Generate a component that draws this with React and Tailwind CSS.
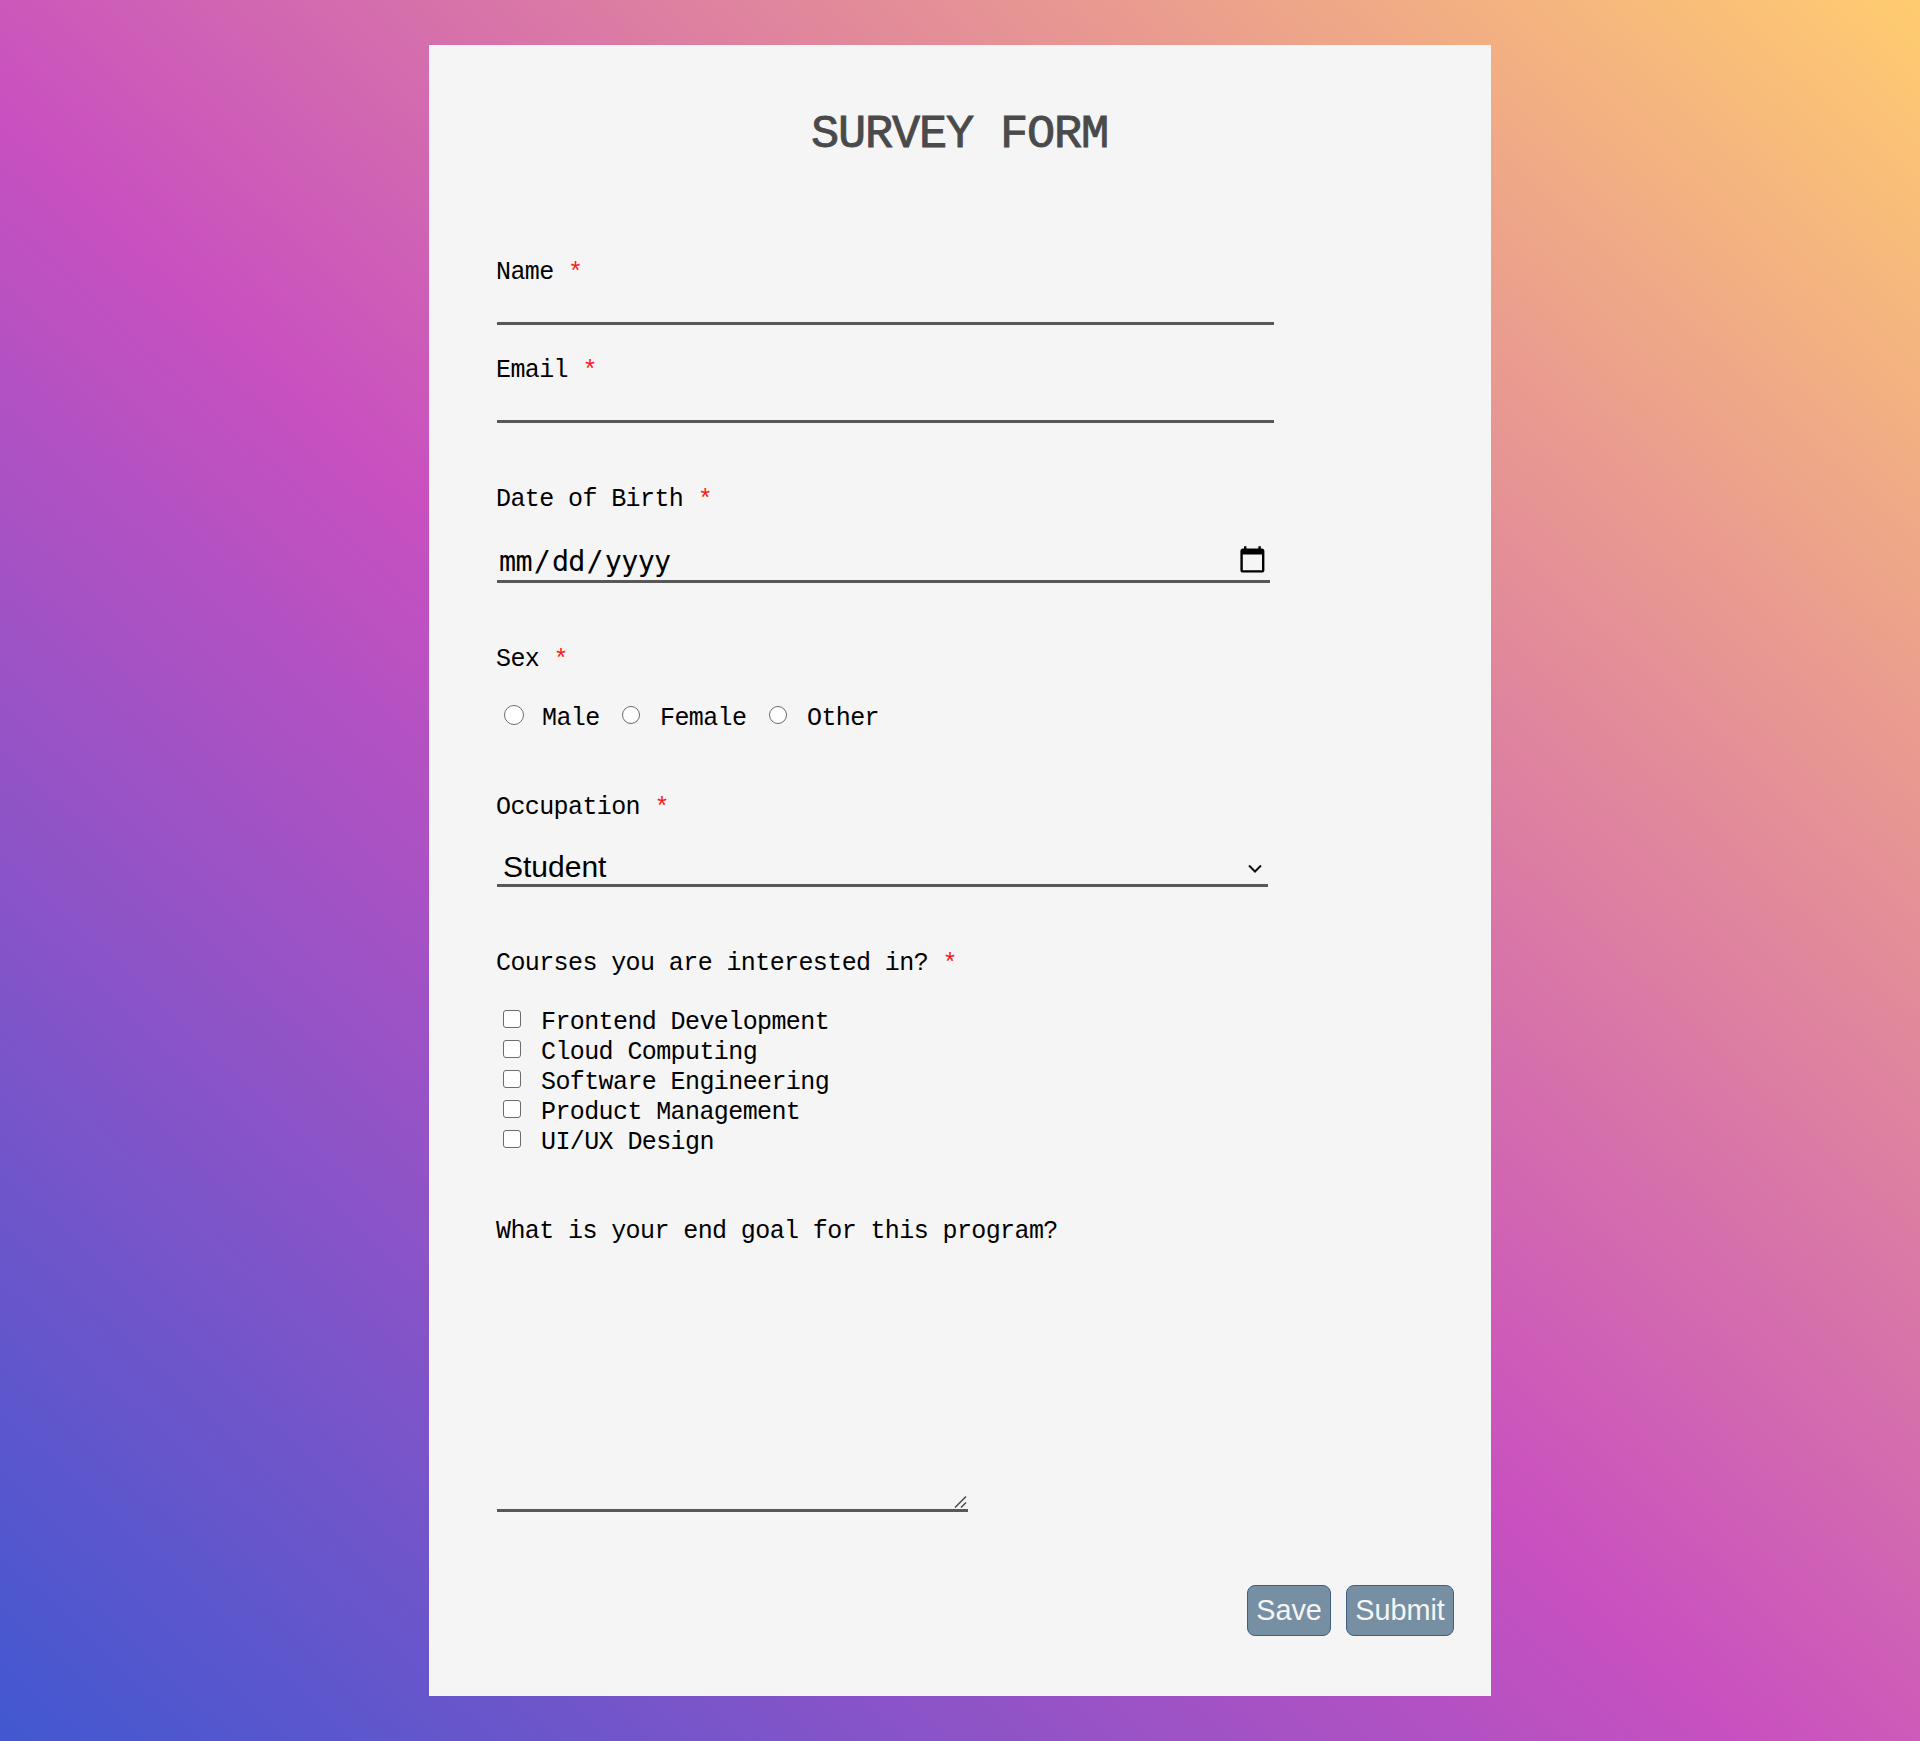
import React from "react";

const courses = [
  "Frontend Development",
  "Cloud Computing",
  "Software Engineering",
  "Product Management",
  "UI/UX Design",
];

function Label({ children, required = true, className = "" }) {
  return (
    <div className={`-ml-px h-7 whitespace-pre text-[25px] leading-[27px] tracking-[-0.6px] ${className}`}>
      {children}
      {required && <span className="relative top-px text-[#ff1a1a]"> *</span>}
    </div>
  );
}

function Radio({ label, className }) {
  return (
    <label className={`flex ${className}`}>
      <input
        type="radio"
        name="sex"
        className="mt-px mr-[20px] size-[18px] shrink-0 appearance-none rounded-full border border-[#6b6b6b] bg-white"
      />
      {label}
    </label>
  );
}

export default function App() {
  return (
    <div className="flex h-[1741px] bg-[linear-gradient(43deg,#4158D0_0%,#C850C0_46%,#FFCC70_100%)] pt-[45px] pl-[429px] font-['Liberation_Mono',monospace] text-black">
      <form className="flex h-[1651px] w-[1062px] flex-col bg-[#f5f5f5] pt-16 pr-[37px] pl-[68px]">
        <h1 className="mr-[32px] h-[52px] text-center text-[47px] leading-[52px] tracking-[-1.2px] text-[#4a4a4a] [-webkit-text-stroke:0.9px_#4a4a4a]">
          SURVEY FORM
        </h1>

        <Label className="mt-[98px]">Name</Label>
        <input className="h-[38px] w-[777px] border-b-3 border-[#585858] bg-transparent outline-none" />

        <Label className="mt-8">Email</Label>
        <input className="h-[38px] w-[777px] border-b-3 border-[#585858] bg-transparent outline-none" />

        <Label className="mt-[63px]">Date of Birth</Label>
        <div className="flex h-[69px] w-[773px] items-start justify-between border-b-3 border-[#585858] pt-[31px] pr-[3px] pl-[2px]">
          <div className="flex font-['DejaVu_Sans_Mono',monospace] text-[28.4px] leading-[33px] tracking-[-0.65px]">
            <span>mm</span>
            <span className="w-5 text-center">/</span>
            <span>dd</span>
            <span className="w-5 text-center">/</span>
            <span>yyyy</span>
          </div>
          <svg viewBox="0 0 24 24" className="size-[28.8px]">
            <path d="M20 3h-1V1h-2v2H7V1H5v2H4c-1.1 0-2 .9-2 2v16c0 1.1.9 2 2 2h16c1.1 0 2-.9 2-2V5c0-1.1-.9-2-2-2zm0 18H4V8h16v13z" />
          </svg>
        </div>

        <Label className="mt-[63px]">Sex</Label>
        <div className="mt-[31px] flex h-7 text-[25px] leading-[27px] tracking-[-0.6px]">
          <label className="flex w-[125px] pl-[7px]">
            <input
              type="radio"
              name="sex"
              className="mr-[18px] size-5 shrink-0 appearance-none rounded-full border border-[#6b6b6b] bg-white"
            />
            Male
          </label>
          <Radio label="Female" className="w-[147px]" />
          <Radio label="Other" className="" />
        </div>

        <Label className="mt-[61px]">Occupation</Label>
        <div className="flex h-[65px] w-[771px] justify-between border-b-3 border-[#585858] pt-[28px] pr-[6px] pl-[6px]">
          <span className="font-['Liberation_Sans',sans-serif] text-[30px] leading-[34px]">Student</span>
          <svg viewBox="0 0 14 10" className="mt-[14px] h-[10px] w-[14px]" fill="none" stroke="#101010" strokeWidth="2">
            <path d="M1 1.5L7 7.5L13 1.5" />
          </svg>
        </div>

        <Label className="mt-[63px]">Courses you are interested in?</Label>
        <div className="mt-[31px] text-[25px] leading-[27px] tracking-[-0.6px]">
          {courses.map((course) => (
            <label key={course} className="flex h-[30px] pl-[6px]">
              <input
                type="checkbox"
                className="mt-px mr-[20px] size-[18px] shrink-0 appearance-none rounded-[3px] border border-[#6b6b6b] bg-white"
              />
              {course}
            </label>
          ))}
        </div>

        <Label required={false} className="mt-[59px]">
          What is your end goal for this program?
        </Label>
        <div className="flex h-[266px] w-[471px] items-end border-b-3 border-[#585858]">
          <textarea className="h-full flex-1 resize-none bg-transparent outline-none" />
          <svg viewBox="0 0 14 14" className="size-[14px]" fill="none" stroke="#505050" strokeWidth="1.6">
            <path d="M1 12.5L12 1.5M7 12.5L12 7.5" />
          </svg>
        </div>

        <div className="mt-[73px] flex justify-end gap-[15px] font-['Liberation_Sans',sans-serif] text-[28.8px] leading-[33px] text-[#f5f5f5]">
          <button type="button" className="h-[51px] w-[84px] rounded-lg border border-[#3f6080] bg-[#778fa3]">
            Save
          </button>
          <button type="button" className="h-[51px] w-[108px] rounded-lg border border-[#3f6080] bg-[#778fa3]">
            Submit
          </button>
        </div>
      </form>
    </div>
  );
}
